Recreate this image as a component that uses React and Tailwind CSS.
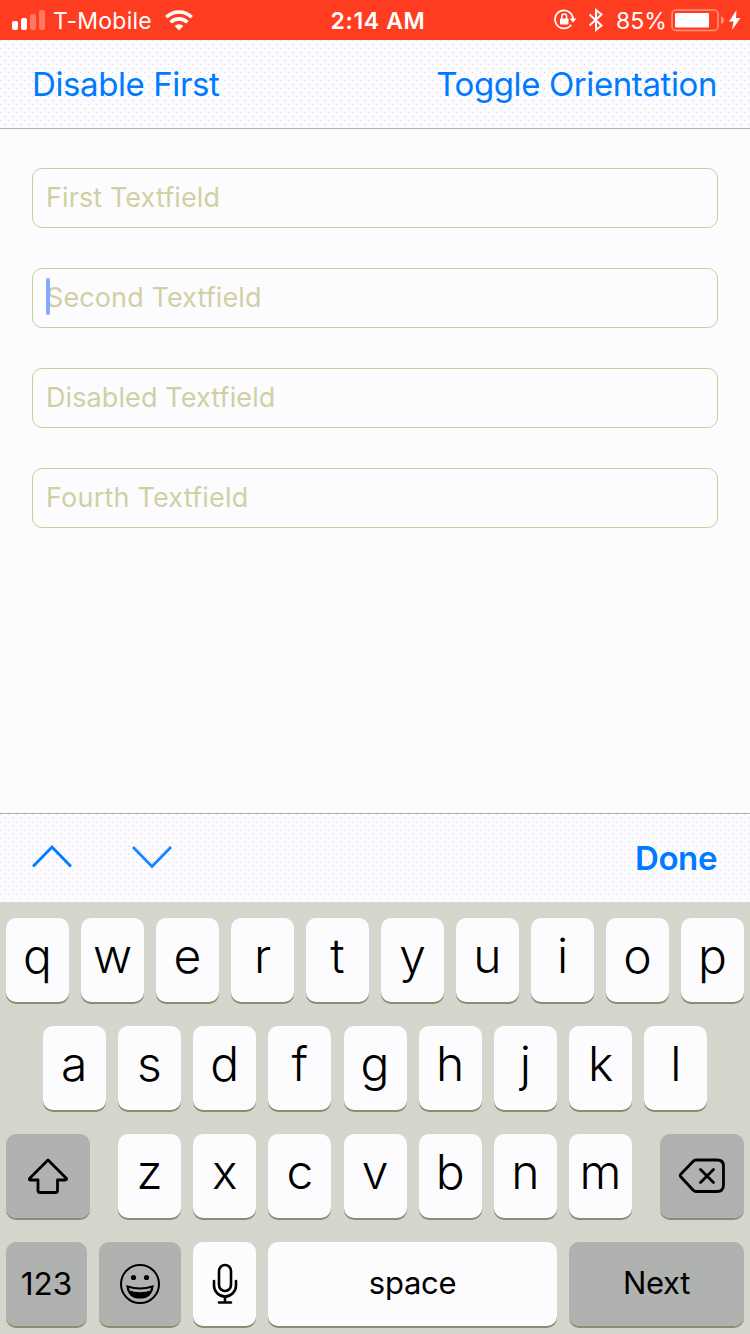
const dots =
  "bg-[#fcfcff] bg-[radial-gradient(circle_at_0.5px_0.5px,#d4d0fa_0.6px,transparent_0.6px),radial-gradient(circle_at_4.5px_4.5px,#d4d0fa_0.6px,transparent_0.6px)] bg-[size:8px_8px]";

const grayEven =
  "bg-[linear-gradient(45deg,#aaafb8_37%,#b3b3a6_37%_63%,#aaafb8_63%)] bg-[size:2px_2px]";
const grayOdd =
  "bg-[linear-gradient(45deg,#b3b3a6_37%,#aaafb8_37%_63%,#b3b3a6_63%)] bg-[size:2px_2px]";

function Key({ children, className = "" }) {
  return (
    <div
      className={
        "flex h-[84px] shrink-0 items-center justify-center rounded-[10px] text-black shadow-[0_2px_0_#8c8d70] " +
        className
      }
    >
      {children}
    </div>
  );
}

function Letter({ children }) {
  return (
    <Key className="w-[63px] bg-[#fcfcff] pb-[8px] text-[48px] font-[350] leading-none">
      <span>{children}</span>
    </Key>
  );
}

function Field({ label, focused, track }) {
  return (
    <div className="relative flex h-[60px] items-center rounded-[10px] border border-[#cccc98] bg-[#fcfcff] pb-[2px] pl-[13px]">
      <span className={"text-[27px] leading-none text-[#d0d0a2] " + track}>{label}</span>
      {focused && <span className="absolute left-[13px] top-[9px] h-[37px] w-1 rounded-full bg-[#86a8ff]" />}
    </div>
  );
}

function StatusBar() {
  return (
    <header className="grid h-10 grid-cols-[1fr_auto_1fr] items-center bg-[linear-gradient(45deg,#ff3040_37%,#ff4900_37%_63%,#ff3040_63%)] bg-[size:2px_2px] text-[23px] leading-none text-white">
      <div className="flex items-center pl-3">
        <svg width="34" height="22" viewBox="0 0 34 22" fill="white">
          <rect x="0" y="12" width="6" height="9" rx="2" />
          <rect x="9" y="9" width="6" height="12" rx="2" />
          <rect x="18" y="5" width="6" height="16" rx="2" opacity=".3" />
          <rect x="27" y="1" width="6" height="20" rx="2" opacity=".3" />
        </svg>
        <span className="ml-[7px] w-[99px] whitespace-nowrap pt-[2px] tracking-[0.25px]">T-Mobile</span>
        <svg className="ml-[13px]" width="28" height="21" viewBox="0 0 28 21" fill="none" stroke="white" strokeWidth="3.6">
          <path d="M1.3 7.3a18 18 0 0 1 25.4 0" />
          <path d="M5.6 12.3a12 12 0 0 1 16.8 0" />
          <path d="M14 20.5l-4.3-4.4a6.2 6.2 0 0 1 8.6 0z" fill="white" stroke="none" />
        </svg>
      </div>
      <span className="ml-[6px] w-[96px] whitespace-nowrap pt-[2px] text-center font-semibold tracking-[0.65px]">2:14 AM</span>
      <div className="flex items-center justify-end pr-[9px]">
        <svg width="23" height="22" viewBox="0 0 23 22" fill="none" stroke="white" strokeWidth="1.8">
          <path d="M17.2 15.8A9 9 0 1 1 19 10" />
          <path d="M15.500 9.500h7l-3.500 4z" fill="white" stroke="none" />
          <rect x="6" y="9.500" width="8.500" height="6" rx="1" fill="white" stroke="none" />
          <path d="M7.800 10V7.500a2.400 2.400 0 0 1 4.800 0V10" strokeWidth="1.500" />
        </svg>
        <svg className="ml-[11px]" width="16" height="24" viewBox="0 0 16 24" fill="none" stroke="white" strokeWidth="2">
          <path d="M1.500 6.500l12 11L8 22V2l5.500 4.500-12 11" />
        </svg>
        <span className="ml-[12px] w-[51px] whitespace-nowrap pt-[2px]">85%</span>
        <svg className="ml-[4px]" width="54" height="24" viewBox="0 0 54 24" fill="white">
          <rect x="1" y="2" width="46" height="20.500" rx="4" fill="none" stroke="white" strokeWidth="1.500" opacity=".45" />
          <rect x="4" y="5" width="34" height="14.500" rx="1" />
          <path d="M50 8.500c4 1 4 6.500 0 7.500z" opacity=".45" />
        </svg>
        <svg className="ml-[4px]" width="12" height="20" viewBox="0 0 12 20" fill="white">
          <path d="M7.500 0L0 11.500h4.500L3 20l8.500-12H7z" />
        </svg>
      </div>
    </header>
  );
}

function Letters({ text, className }) {
  return (
    <div className={"flex justify-center " + className}>
      {text.split("").map((c) => (
        <Letter key={c}>{c}</Letter>
      ))}
    </div>
  );
}

export default function App() {
  return (
    <div className="flex h-[1334px] w-[750px] flex-col overflow-hidden bg-[#fcfcff] font-[Inter,sans-serif]">
      <StatusBar />
      <nav className={"flex h-[89px] shrink-0 items-center justify-between border-b border-[#b1b1aa] pl-8 pr-[33px] text-[33px] leading-none text-[#007aff] " + dots}>
        <span className="tracking-[-0.400px]">Disable First</span>
        <span className="tracking-[-0.400px]">Toggle Orientation</span>
      </nav>
      <main className="flex flex-1 flex-col gap-10 px-8 pt-[39px]">
        <Field label="First Textfield" track="tracking-[0.1px]" />
        <Field label="Second Textfield" track="tracking-[0.1px]" focused />
        <Field label="Disabled Textfield" track="tracking-[0.1px]" />
        <Field label="Fourth Textfield" track="tracking-[0.2px]" />
      </main>
      <div className={"flex h-[89px] shrink-0 items-center border-t border-[#b1b1aa] pl-8 pr-[33px] " + dots}>
        <svg className="mb-[2px]" width="40" height="24" viewBox="0 0 40 24" fill="none" stroke="#007aff" strokeWidth="2.800">
          <path d="M1 21.500L20 2l19 19.500" />
        </svg>
        <svg className="mb-[2px] ml-[60px]" width="40" height="24" viewBox="0 0 40 24" fill="none" stroke="#1686ff" strokeWidth="2.800">
          <path d="M1 2l19 19.500L39 2" />
        </svg>
        <span className="ml-auto text-[33px] font-semibold leading-none tracking-[-0.400px] text-[#007aff]">Done</span>
      </div>
      <section className="flex h-[432px] shrink-0 flex-col gap-6 bg-[linear-gradient(45deg,#cdd2f0_37%,#dbdbaa_37%_63%,#cdd2f0_63%)] bg-[size:2px_2px] px-[6px] pt-4">
        <Letters text="qwertyuiop" className="gap-3" />
        <Letters text="asdfghjkl" className="gap-[12.200px]" />
        <div className="flex justify-between">
          <Key className={"w-[84px] " + grayEven}>
            <svg width="42" height="38" viewBox="0 0 42 38" fill="none" stroke="black" strokeWidth="2.800" strokeLinejoin="round">
              <path d="M21 3L2.500 21.500Q2 23 3.500 23H11v10.500q0 2 2 2h15.500q2 0 2-2V23H38q2 0 1.500-1.500z" />
            </svg>
          </Key>
          <Letters text="zxcvbnm" className="gap-[12.200px]" />
          <Key className={"w-[84px] " + grayEven}>
            <svg width="48" height="38" viewBox="0 0 48 38" fill="none" stroke="black" strokeWidth="2.800" strokeLinejoin="round" strokeLinecap="round">
              <path d="M18 3h21q6.500 0 6.500 6v19q0 6.500-6.500 6.500H18q-1.500 0-3-1.500L2.500 19.500q-.7-1 0-2L15 4.500Q16.500 3 18 3z" />
              <path d="M22.500 12.500l13 13m0-13l-13 13" />
            </svg>
          </Key>
        </div>
        <div className="flex gap-3">
          <Key className={"w-[81px] text-[31.500px] " + grayEven}>123</Key>
          <Key className={"w-[82px] " + grayOdd}>
            <svg width="42" height="42" viewBox="0 0 42 42" fill="none" stroke="black" strokeWidth="2">
              <circle cx="21" cy="21" r="19" />
              <circle cx="14.500" cy="14.500" r="2.600" fill="black" stroke="none" />
              <circle cx="27.500" cy="14.500" r="2.600" fill="black" stroke="none" />
              <path d="M8.500 23.500q12.500 4 25 0-1.500 11-12.500 11T8.500 23.500z" />
              <path d="M9 27q12 4.500 24 0-2 7.500-12 7.500T9 27z" fill="black" stroke="none" />
            </svg>
          </Key>
          <Key className="w-[63px] bg-[#fcfcff]">
            <svg width="26" height="42" viewBox="0 0 26 42" fill="none" stroke="black" strokeWidth="2.600" strokeLinecap="round">
              <rect x="7" y="2" width="12" height="26" rx="6" />
              <path d="M2 18v4.500a11 11 0 0 0 22 0V18M13 33.500v6M7 39.500h12" />
            </svg>
          </Key>
          <Key className="w-[289px] bg-[#fcfcff] pb-[2px] text-[31px] tracking-[-0.3px]">space</Key>
          <Key className={"w-[175px] pb-[2px] text-[31px] tracking-[-0.3px] " + grayOdd}>Next</Key>
        </div>
      </section>
    </div>
  );
}
